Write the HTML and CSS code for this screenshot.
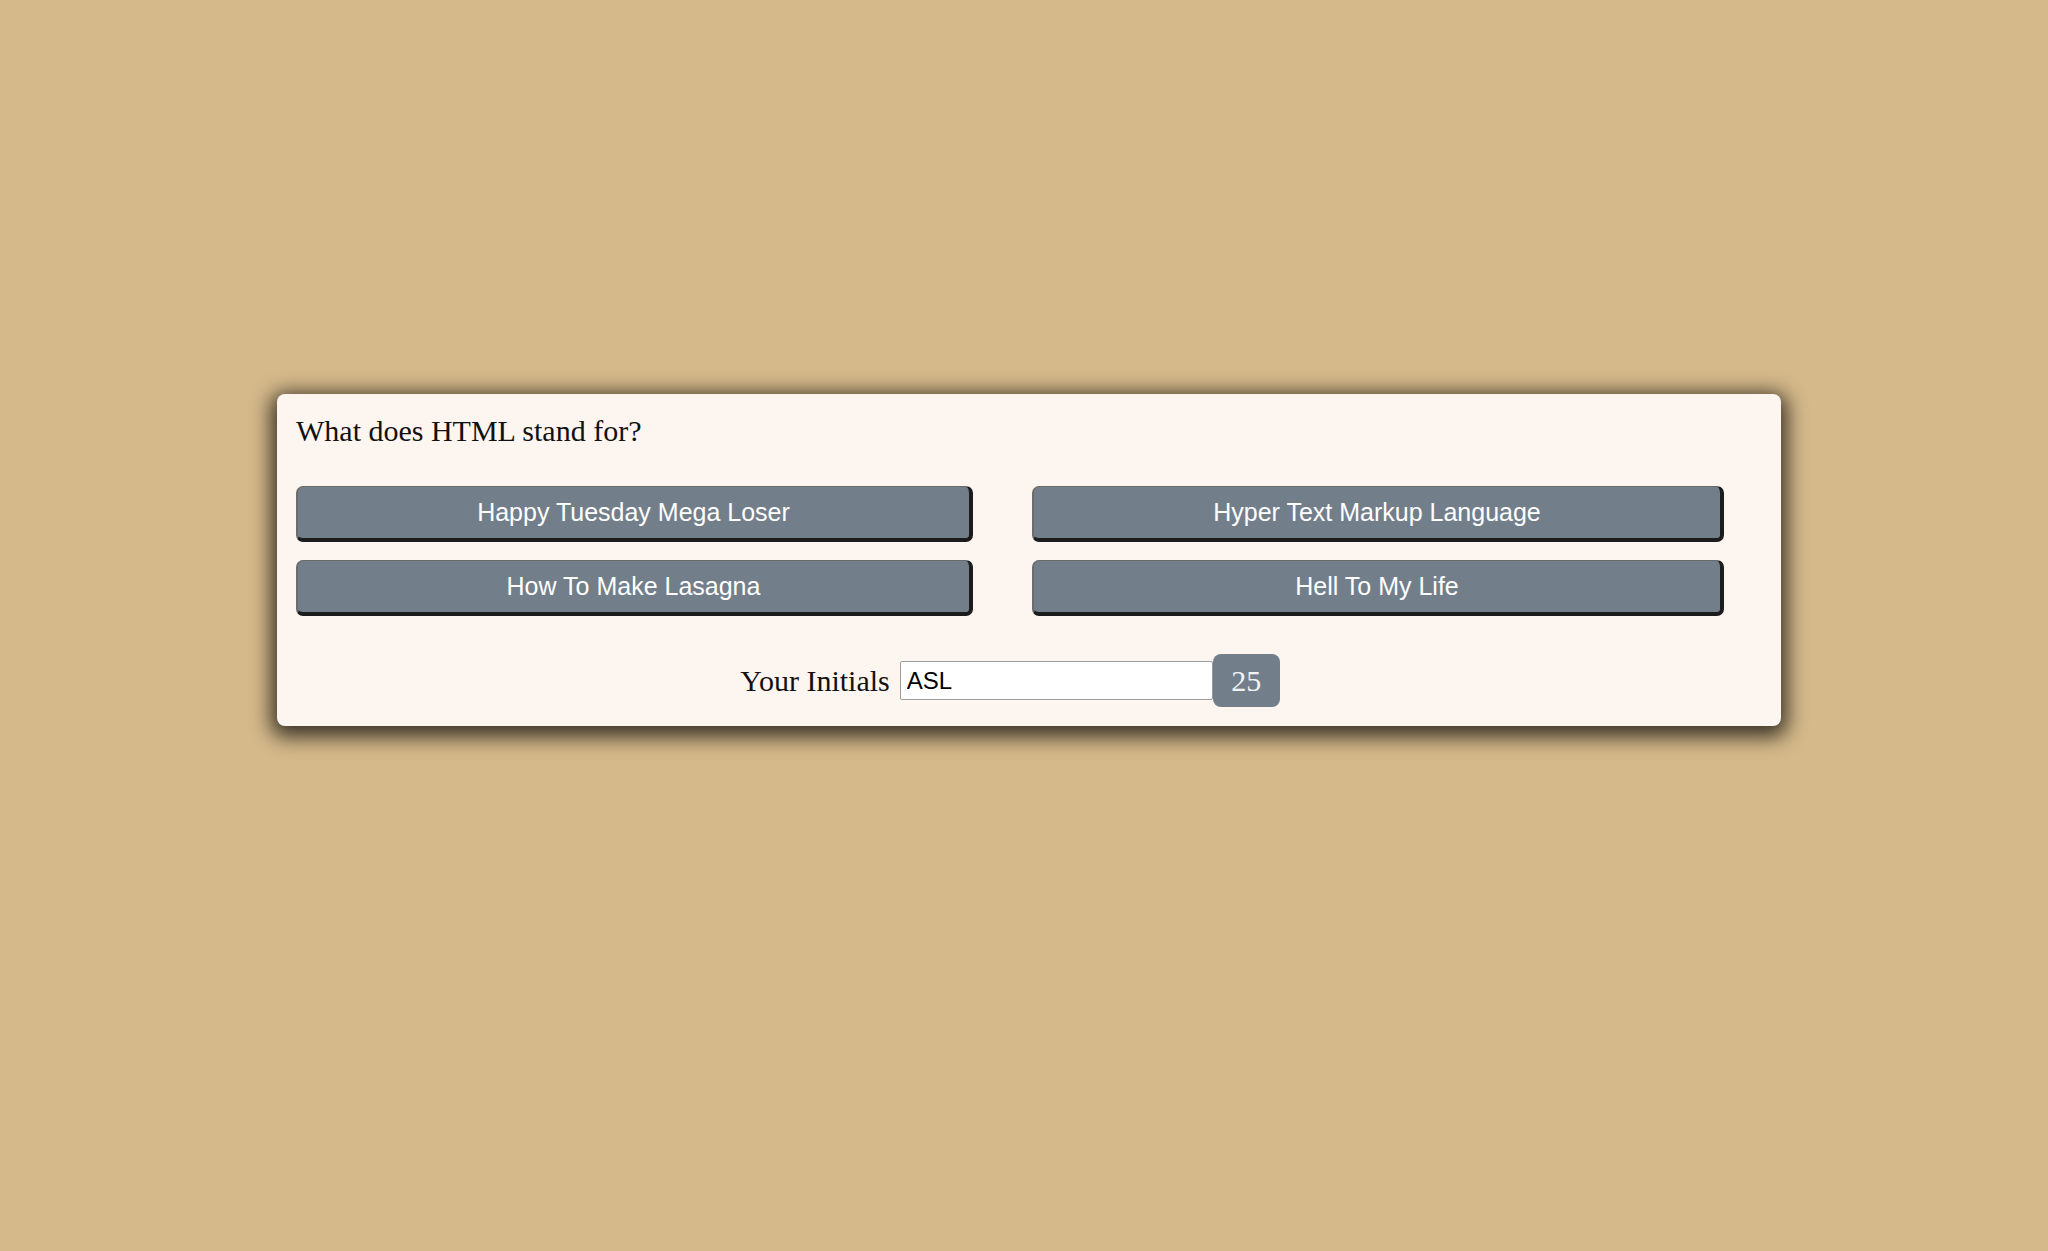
FILE: index.html
```html
<!DOCTYPE html>
<html lang="en">
<head>
<meta charset="utf-8">
<title>Quiz</title>
<link rel="stylesheet" href="styles.css">
</head>
<body>
  <div class="card">
    <p class="question">What does HTML stand for?</p>
    <div class="answers">
      <button class="answer">Happy Tuesday Mega Loser</button>
      <button class="answer">Hyper Text Markup Language</button>
      <button class="answer">How To Make Lasagna</button>
      <button class="answer">Hell To My Life</button>
    </div>
    <div class="initials">
      <label class="label" for="ini">Your Initials</label>
      <input id="ini" class="field" type="text" value="ASL">
      <div class="score">25</div>
    </div>
  </div>
</body>
</html>
```
FILE: styles.css
```css
html, body {
  margin: 0;
  padding: 0;
}
body {
  background: #d5b98b;
  width: 2048px;
  height: 1251px;
  overflow: hidden;
  font-family: "Liberation Serif", "Times New Roman", serif;
}
.card {
  box-sizing: border-box;
  width: 1504px;
  margin: 394px 0 0 277px;
  padding: 20px 57px 19px 19px;
  background: #fdf5f0;
  border-radius: 8px;
  box-shadow: 0 5px 20px 6px rgba(0, 0, 0, 0.72);
}
.question {
  margin: 0;
  font-size: 30px;
  line-height: 33px;
  color: #111;
}
.answers {
  display: grid;
  grid-template-columns: 677px 692px;
  column-gap: 59px;
  row-gap: 18px;
  margin-top: 39px;
}
.answer {
  box-sizing: border-box;
  height: 56px;
  margin: 0;
  padding: 0;
  background: #737e8b;
  color: #fff;
  font-family: "Liberation Sans", Arial, sans-serif;
  font-size: 25px;
  border-style: solid;
  border-width: 1px 4px 4px 2px;
  border-color: #6a6a6a #1c1c1c #1c1c1c #6c6c6c;
  border-radius: 7px;
}
.initials {
  display: flex;
  justify-content: center;
  align-items: center;
  margin-top: 38px;
}
.label {
  font-size: 30px;
  color: #111;
  margin-right: 10px;
}
.field {
  box-sizing: border-box;
  width: 313px;
  height: 39px;
  margin: 0;
  padding: 0 6px;
  border: 1px solid #9c9c9c;
  border-radius: 2px;
  background: #fff;
  font-family: "Liberation Sans", Arial, sans-serif;
  font-size: 24px;
  color: #000;
}
.score {
  box-sizing: border-box;
  width: 67px;
  height: 53px;
  display: flex;
  align-items: center;
  justify-content: center;
  background: #737e8b;
  color: #f2f2f2;
  font-size: 30px;
  border-radius: 8px;
}
```
